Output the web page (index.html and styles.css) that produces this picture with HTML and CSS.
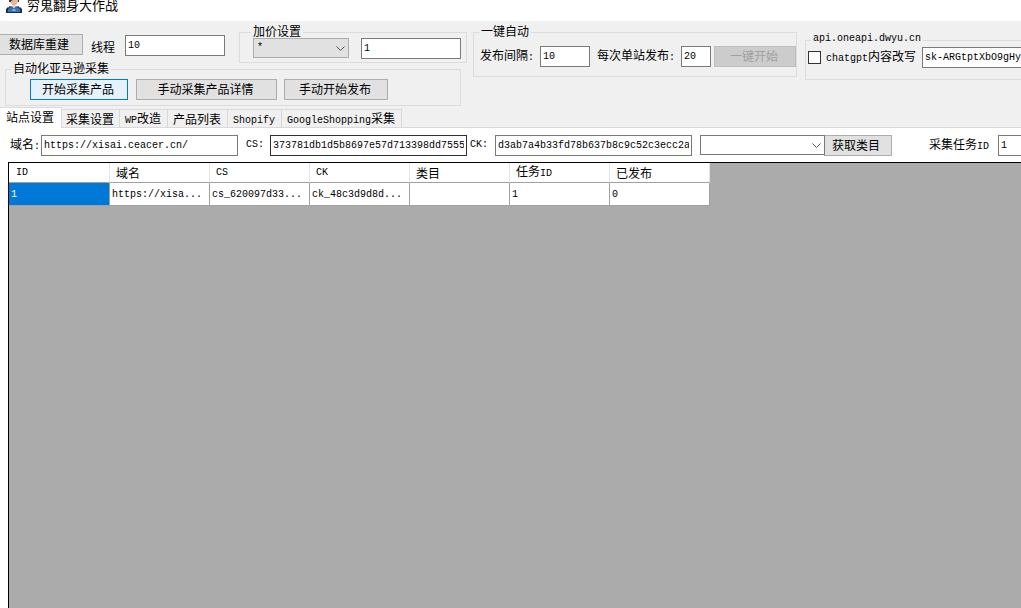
FILE: index.html
```html
<!DOCTYPE html>
<html lang="zh-CN">
<head>
<meta charset="utf-8">
<title>穷鬼翻身大作战</title>
<link rel="stylesheet" href="styles.css">
</head>
<body>
<header class="titlebar">
  <svg class="app-icon" viewBox="0 0 16 16" aria-hidden="true">
    <path d="M4 0h8v5l-2 3H6L4 5z" fill="#e8b79a"/>
    <path d="M3 0h10v5h-1V3L9 2 5 4v1H3z" fill="#3a2f3c"/>
    <path d="M1 16v-3l2-3 3-1 2 2 2-2 3 1 2 3v3z" fill="#3f6fb5"/>
    <path d="M0 15h16v1H0zM0 12l2-2v5H0zM16 12l-2-2v5h2zM4 9l-2 2v1l3-2zM12 9l2 2v1l-3-2z" fill="#1e2c50"/>
    <path d="M6 8h4l-2 3z" fill="#f1c8ad"/>
    <path d="M7 12h2l1 2H6z" fill="#58c0e8"/>
  </svg>
  <h1 class="title">穷鬼翻身大作战</h1>
</header>

<section class="toolbar">
  <div class="left">
    <div class="top-row">
      <button class="btn rebuild">数据库重建</button>
      <label class="thread-label" for="threads">线程</label>
      <input class="field w100 thread-input" id="threads" value="10">
      <fieldset class="group markup">
        <legend>加价设置</legend>
        <div class="markup-row">
          <span class="combo combo-gray">
            <select aria-label="加价方式"><option>*</option></select>
            <svg class="chevron" viewBox="0 0 9 6" aria-hidden="true"><path d="M.5.5l4 4 4-4"/></svg>
          </span>
          <input class="field w100" aria-label="加价数值" value="1">
        </div>
      </fieldset>
    </div>
    <div class="collect-wrap">
      <fieldset class="group collect">
        <legend>自动化亚马逊采集</legend>
        <div class="collect-row">
          <button class="btn primary w98">开始采集产品</button>
          <button class="btn w141">手动采集产品详情</button>
          <button class="btn w104">手动开始发布</button>
        </div>
      </fieldset>
    </div>
  </div>

  <fieldset class="group auto">
    <legend>一键自动</legend>
    <div class="auto-row">
      <label class="interval-label" for="interval">发布间隔<span class="latin">:</span></label>
      <input class="field w50" id="interval" value="10">
      <label class="each-label" for="each">每次单站发布<span class="latin">:</span></label>
      <input class="field w30" id="each" value="20">
      <button class="btn start" disabled>一键开始</button>
    </div>
  </fieldset>

  <fieldset class="group api">
    <legend class="latin">api.oneapi.dwyu.cn</legend>
    <div class="api-row">
      <input class="check" type="checkbox" id="rewrite">
      <label class="rewrite-label" for="rewrite"><span class="latin">chatgpt</span>内容改写</label>
      <input class="field key" aria-label="API key" value="sk-ARGtptXbO9gHy">
    </div>
  </fieldset>
</section>

<nav class="tabs" role="tablist">
  <button class="tab active" role="tab" aria-selected="true">站点设置</button>
  <button class="tab" role="tab">采集设置</button>
  <button class="tab" role="tab"><span class="latin">WP</span>改造</button>
  <button class="tab" role="tab">产品列表</button>
  <button class="tab" role="tab"><span class="latin">Shopify</span></button>
  <button class="tab" role="tab"><span class="latin">GoogleShopping</span>采集</button>
</nav>

<main class="page">
  <div class="filters">
    <label class="domain-label" for="domain">域名<span class="latin">:</span></label>
    <input class="field w197" id="domain" value="https://xisai.ceacer.cn/">
    <label class="cs-label latin" for="cs">CS:</label>
    <input class="field w197 dark" id="cs" value="373781db1d5b8697e57d713398dd7555">
    <label class="ck-label latin" for="ck">CK:</label>
    <input class="field w197" id="ck" value="d3ab7a4b33fd78b637b8c9c52c3ecc2a">
    <span class="combo category">
      <select aria-label="类目"><option></option></select>
      <svg class="chevron" viewBox="0 0 9 6" aria-hidden="true"><path d="M.5.5l4 4 4-4"/></svg>
    </span>
    <button class="btn fetch w68">获取类目</button>
    <label class="task-label" for="task">采集任务<span class="latin">ID</span></label>
    <input class="field task" id="task" value="1">
  </div>
  <div class="grid">
    <table>
      <thead>
        <tr>
          <th class="latin first">ID</th><th>域名</th><th class="latin">CS</th><th class="latin">CK</th><th>类目</th><th>任务<span class="latin">ID</span></th><th>已发布</th>
        </tr>
      </thead>
      <tbody>
        <tr>
          <td class="selected">1</td><td>https://xisa...</td><td>cs_620097d33...</td><td>ck_48c3d9d8d...</td><td></td><td>1</td><td>0</td>
        </tr>
      </tbody>
    </table>
  </div>
</main>
</body>
</html>
```
FILE: styles.css
```css
* { box-sizing: border-box; }

body {
  margin: 0;
  height: 100vh;
  overflow: hidden;
  display: flex;
  flex-direction: column;
  background: #f0f0f0;
  color: #000;
  font: 12px/12px "Noto Sans CJK SC", sans-serif;
}

button, input, select { font: inherit; color: inherit; margin: 0; border-radius: 0; }
label { white-space: nowrap; flex: none; }

.latin, .field, td, select { font-family: "Liberation Mono", monospace; font-size: 10px; }

/* Title bar */
.titlebar {
  flex: none;
  height: 21px;
  display: flex;
  align-items: flex-start;
  gap: 5px;
  padding-left: 6px;
  background: #fff;
  overflow: hidden;
}
.app-icon { width: 16px; height: 16px; margin-top: -3px; }
.title { margin: -3px 0 0; font-size: 13px; line-height: 16px; font-weight: 400; }

/* Shared controls */
.btn {
  flex: none;
  height: 21px;
  padding: 0 2px 1px 0;
  border: 1px solid #adadad;
  background: #e1e1e1;
  line-height: 16px;
  white-space: nowrap;
}
.btn.primary { border-color: #0078d7; background: #e5f1fb; }
.btn:disabled { border-color: #bfbfbf; background: #ccc; color: #a0a0a0; }

.field {
  flex: none;
  height: 21px;
  padding: 0 2px;
  border: 1px solid #7a7a7a;
  background: #fff;
  outline: 0;
}
.field.dark { border-color: #333; }

.combo { position: relative; flex: none; height: 20px; }
.combo select {
  appearance: none;
  display: block;
  width: 100%;
  height: 100%;
  padding: 0 3px;
  border: 1px solid #7a7a7a;
  background: #fff;
}
.combo-gray select { border-color: #adadad; background: #e1e1e1; }
.chevron {
  position: absolute;
  right: 4px;
  top: 8px;
  width: 9px;
  height: 6px;
  fill: none;
  stroke: #555;
  pointer-events: none;
}

.w30 { width: 30px; }
.w50 { width: 50px; }
.w68 { width: 68px; }
.w98 { width: 98px; }
.w100 { width: 100px; }
.w104 { width: 104px; }
.w141 { width: 141px; }
.w197 { width: 197px; }

.group { flex: none; margin: 0; padding: 0; min-width: 0; border: 1px solid #dcdcdc; }
.group legend { margin-left: 5px; padding: 0 2px; height: 12px; line-height: 10px; }

/* Toolbar */
.toolbar { flex: none; display: flex; align-items: flex-start; padding-top: 5px; overflow: hidden; }
.left { flex: none; width: 467px; margin-right: 6px; }
.top-row { display: flex; align-items: flex-start; }
.rebuild { width: 83px; margin-top: 8px; padding-right: 4px; border-left: 0; }
.thread-label { margin: 15px 10px 0 8px; }
.thread-input { margin-top: 9px; }

.markup { width: 228px; height: 37px; margin-left: auto; }
.markup legend { margin-left: 11px; }
.markup-row { display: flex; gap: 12px; padding-left: 13px; }
.combo-gray { width: 96px; }

.collect-wrap { position: relative; width: 461px; padding-left: 5px; background: #f0f0f0; }
.collect { height: 43px; }
.collect-row { display: flex; gap: 8px; padding: 4px 0 0 24px; }
.collect-row .w104 { margin-left: -1px; }

.auto { width: 324px; height: 51px; margin-right: 8px; }
.auto-row { display: flex; align-items: center; padding: 8px 0 0 6px; }
.interval-label { width: 60px; }
.each-label { width: 84px; margin-left: 7px; }
.start { width: 82px; margin-left: 3px; }

.api { flex: 1 0 200px; height: 46px; margin-top: 8px; border-right: 0; }
.api-row { display: flex; align-items: center; padding: 1px 0 0 2px; }
.check { appearance: none; flex: none; width: 13px; height: 13px; border: 1px solid #333; background: #fff; }
.rewrite-label { width: 96px; margin-left: 5px; }
.key { flex: 1; width: 80px; min-width: 0; padding-right: 0; border-right: 0; }

/* Tabs */
.tabs { flex: none; display: flex; align-items: flex-end; height: 22px; border-bottom: 1px solid #d9d9d9; }
.tab {
  flex: none;
  height: 18px;
  padding: 1px 5px 0 4px;
  border: 1px solid #d9d9d9;
  border-width: 1px 1px 0 0;
  background: #f0f0f0;
  white-space: nowrap;
}
.tab:nth-child(n+3) { padding-left: 5px; padding-right: 6px; }
.tab.active { height: 21px; margin-bottom: -1px; padding: 0 7px 2px 6px; border-left: 0; background: #fff; }

/* Site page */
.page { flex: 1; display: flex; flex-direction: column; background: #fff; min-height: 0; }
.filters { flex: none; display: flex; align-items: center; height: 34px; padding-left: 10px; }
.domain-label { width: 31px; }
.cs-label { width: 24px; margin-left: 8px; }
.ck-label { width: 25px; margin-left: 3px; }
.category { width: 125px; margin-left: 8px; }
.fetch { margin-left: -1px; padding-right: 4px; }
.task-label { width: 69px; margin-left: 37px; }
.task { flex: 0 1 100px; width: 20px; min-width: 0; border-right: 0; }

.grid {
  flex: 1;
  margin-left: 8px;
  border: 1px solid #000;
  border-width: 1px 0 0 1px;
  background: #ababab;
}
.grid table { width: 701px; table-layout: fixed; border-collapse: separate; border-spacing: 0; background: #fff; }
.grid th {
  height: 20px;
  padding: 0 6px;
  border-right: 1px solid #e5e5e5;
  border-bottom: 1px solid #a0a0a0;
  font-weight: 400;
  text-align: left;
}
.grid th.first { width: 101px; padding-left: 7px; }
.grid td {
  height: 23px;
  padding: 2px 2px 0;
  border-right: 1px solid #a0a0a0;
  border-bottom: 1px solid #a0a0a0;
  white-space: nowrap;
}
.grid td.selected { background: #0078d7; color: #fff; }
```
